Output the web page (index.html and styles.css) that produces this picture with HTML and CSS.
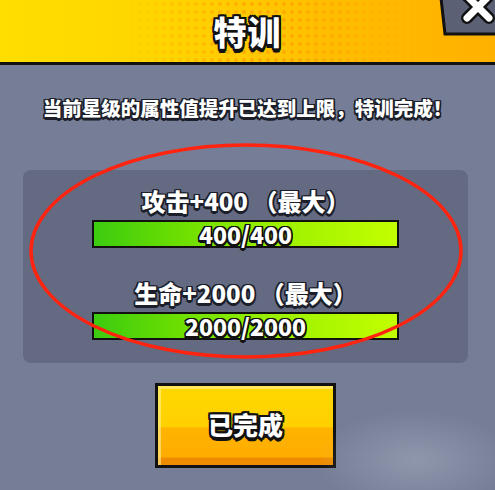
FILE: index.html
```html
<!DOCTYPE html>
<html>
<head>
    <title>特训</title>
    <link rel="stylesheet" href="styles.css">
</head>
<body>
    <div class="header">
        <h1 class="title">特训</h1>
        <svg class="close" width="56" height="38" viewBox="0 0 56 38">
            <path d="M2 -2 L6 34 L58 34 L58 -2 Z" fill="#5b6075" stroke="#111" stroke-width="3"/>
            <path d="M28 -4 L50 18 M50 -4 L28 18" stroke="#111" stroke-width="12" stroke-linecap="round"/>
            <path d="M28 -4 L50 18 M50 -4 L28 18" stroke="#fff" stroke-width="7" stroke-linecap="round"/>
        </svg>
    </div>

    <p class="notice">当前星级的属性值提升已达到上限，特训完成！</p>

    <div class="panel">
        <div class="stat">
            <div class="stat-name">攻击+400 （最大）</div>
            <div class="bar"><span>400/400</span></div>
        </div>
        <div class="stat">
            <div class="stat-name">生命+2000 （最大）</div>
            <div class="bar"><span>2000/2000</span></div>
        </div>
    </div>

    <div class="actions">
        <button class="done">已完成</button>
    </div>

    <svg class="ring" width="495" height="490" viewBox="0 0 495 490">
        <ellipse cx="246" cy="251" rx="215" ry="106" fill="none" stroke="#ff2410" stroke-width="3.5"/>
    </svg>
    <div class="smudge"></div>
</body>
</html>
```

FILE: styles.css
```css
html {
    background-color: #767e97;
}
body {
    margin: 0;
    padding: 0;
    width: 495px;
    height: 490px;
    overflow: hidden;
    position: relative;
    font-family: "Noto Sans CJK SC", "Noto Sans", sans-serif;
    font-weight: 900;
    color: #fff;
}
.header {
    position: relative;
    height: 62px;
    border-bottom: 3px solid #111;
    background: linear-gradient(90deg, #ffde00 0%, #ffd400 35%, #ffbe00 65%, #ffb100 100%);
    display: flex;
    justify-content: center;
    align-items: center;
    overflow: hidden;
}
.header::before {
    content: "";
    position: absolute;
    inset: 0;
    background-image: radial-gradient(circle, rgba(255, 150, 0, 0.55) 1.6px, transparent 2.2px);
    background-size: 8px 8px;
    -webkit-mask-image: linear-gradient(90deg, transparent 25%, #000 50%, #000 60%, transparent 85%);
    mask-image: linear-gradient(90deg, transparent 25%, #000 50%, #000 60%, transparent 85%);
}
.title {
    position: relative;
    margin: 0;
    font-size: 33px;
    font-weight: 900;
    letter-spacing: 1px;
    line-height: 40px;
    text-shadow:
        -2px 0 #111, 2px 0 #111, 0 -2px #111, 0 2px #111,
        -2px -2px #111, 2px -2px #111, -2px 2px #111, 2px 2px #111,
        0 4px #111, 1px 4px #111, -1px 4px #111;
}
.close {
    position: absolute;
    top: 0;
    right: 0;
}
.notice {
    margin: 31px 0 0;
    text-align: center;
    font-size: 19.5px;
    line-height: 24px;
    text-shadow:
        -1.5px 0 #1c1f2a, 1.5px 0 #1c1f2a, 0 -1.5px #1c1f2a, 0 1.5px #1c1f2a,
        -1.5px -1.5px #1c1f2a, 1.5px -1.5px #1c1f2a, -1.5px 1.5px #1c1f2a, 1.5px 1.5px #1c1f2a,
        0 3px #1c1f2a;
}
.panel {
    margin: 50px 27px 0 23px;
    padding: 17px 0 23px;
    background-color: #636a82;
    border-radius: 8px;
    display: flex;
    flex-direction: column;
    align-items: center;
    gap: 31px;
}
.stat {
    display: flex;
    flex-direction: column;
    align-items: center;
    gap: 5px;
}
.stat-name {
    font-size: 24px;
    line-height: 28px;
    text-shadow:
        -1.5px 0 #1c1f2a, 1.5px 0 #1c1f2a, 0 -1.5px #1c1f2a, 0 1.5px #1c1f2a,
        -1.5px -1.5px #1c1f2a, 1.5px -1.5px #1c1f2a, -1.5px 1.5px #1c1f2a, 1.5px 1.5px #1c1f2a,
        0 3px #1c1f2a;
}
.bar {
    width: 303px;
    height: 24px;
    border: 2px solid #111;
    background: linear-gradient(90deg, #3ccb10 0%, #6fe000 30%, #9cf000 60%, #c2ff00 100%);
    display: flex;
    justify-content: center;
    align-items: center;
}
.bar span {
    font-family: "Noto Sans CJK SC", "Noto Sans", sans-serif;
    font-size: 23px;
    font-weight: 900;
    line-height: 24px;
    text-shadow:
        -1.5px 0 #111, 1.5px 0 #111, 0 -1.5px #111, 0 1.5px #111,
        -1.5px -1.5px #111, 1.5px -1.5px #111, -1.5px 1.5px #111, 1.5px 1.5px #111,
        0 2.5px #111;
}
.actions {
    display: flex;
    justify-content: center;
    margin-top: 20px;
    padding-right: 4px;
}
.done {
    width: 181px;
    height: 85px;
    border: 3px solid #111;
    border-radius: 0;
    background: linear-gradient(180deg, #ffd800 0%, #ffd000 52%, #ffb300 53%, #ffad00 90%, #ee8c00 91%, #ee8c00 100%);
    box-shadow: inset 3px 3px 0 rgba(255, 240, 150, 0.6);
    font-family: "Noto Sans CJK SC", sans-serif;
    font-weight: 900;
    font-size: 25px;
    color: #fff;
    padding: 0 0 4px;
    text-shadow:
        -2px 0 #111, 2px 0 #111, 0 -2px #111, 0 2px #111,
        -2px -2px #111, 2px -2px #111, -2px 2px #111, 2px 2px #111,
        0 4px #111;
}
.ring {
    position: absolute;
    top: 0;
    left: 0;
    pointer-events: none;
}
.smudge {
    position: absolute;
    right: -20px;
    bottom: -20px;
    width: 200px;
    height: 100px;
    background: radial-gradient(ellipse at center, rgba(190, 196, 212, 0.35), transparent 70%);
    pointer-events: none;
}
```
